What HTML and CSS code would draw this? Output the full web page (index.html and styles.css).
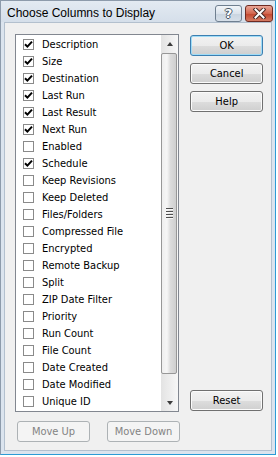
FILE: index.html
```html
<!DOCTYPE html>
<html lang="en">
<head>
    <meta charset="UTF-8">
    <meta name="viewport" content="width=device-width, initial-scale=1.0">
    <title>Choose Columns to Display</title>
    <link rel="stylesheet" href="styles.css">
</head>
<body>
    <div class="window">
        <div class="titlebar">
            <div class="title">Choose Columns to Display</div>
            <div class="caption">
                <button class="cap-btn cap-help">?</button>
                <button class="cap-btn cap-close">
                    <svg width="13" height="11" viewBox="0 0 13 11">
                        <path d="M2.5 1.5 L10.5 9.5 M10.5 1.5 L2.5 9.5" stroke="#4a2a26" stroke-width="4" stroke-linecap="square" fill="none"/>
                        <path d="M2.5 1.5 L10.5 9.5 M10.5 1.5 L2.5 9.5" stroke="#ffffff" stroke-width="2" stroke-linecap="square" fill="none"/>
                    </svg>
                </button>
            </div>
        </div>

        <div class="client">
            <div class="main">
                <div class="listbox">
                    <ul id="columns" class="items"></ul>
                    <div class="scrollbar">
                        <div class="sb-arrow"><span class="tri-up"></span></div>
                        <div class="sb-track">
                            <div class="sb-thumb">
                                <div class="grip"><i></i><i></i><i></i><i></i></div>
                            </div>
                        </div>
                        <div class="sb-arrow"><span class="tri-down"></span></div>
                    </div>
                </div>

                <div class="actions">
                    <button class="btn btn-default">OK</button>
                    <button class="btn">Cancel</button>
                    <button class="btn">Help</button>
                    <button class="btn btn-reset">Reset</button>
                </div>
            </div>

            <div class="move-row">
                <button class="btn" disabled>Move Up</button>
                <button class="btn" disabled>Move Down</button>
            </div>
        </div>
    </div>

    <script>
        const columns = [
            ['Description', true],
            ['Size', true],
            ['Destination', true],
            ['Last Run', true],
            ['Last Result', true],
            ['Next Run', true],
            ['Enabled', false],
            ['Schedule', true],
            ['Keep Revisions', false],
            ['Keep Deleted', false],
            ['Files/Folders', false],
            ['Compressed File', false],
            ['Encrypted', false],
            ['Remote Backup', false],
            ['Split', false],
            ['ZIP Date Filter', false],
            ['Priority', false],
            ['Run Count', false],
            ['File Count', false],
            ['Date Created', false],
            ['Date Modified', false],
            ['Unique ID', false]
        ];

        const checkSvg = '<svg width="9" height="9" viewBox="0 0 9 9"><path d="M1 4.2 L3.4 6.6 L8 1.6" stroke="#000" stroke-width="2" fill="none"/></svg>';
        const list = document.getElementById('columns');

        columns.forEach(([name, checked]) => {
            const li = document.createElement('li');
            li.className = 'item';
            li.innerHTML = `<span class="check">${checked ? checkSvg : ''}</span><span class="label">${name}</span>`;
            li.addEventListener('click', () => {
                const box = li.querySelector('.check');
                box.innerHTML = box.innerHTML ? '' : checkSvg;
            });
            list.appendChild(li);
        });
    </script>
</body>
</html>
```

FILE: styles.css
```css
body {
    margin: 0;
    background: #ffffff;
    font-family: "DejaVu Sans Condensed", "DejaVu Sans", sans-serif;
    font-size: 11px;
    color: #000;
}

.window {
    width: 276px;
    height: 455px;
    box-sizing: border-box;
    border: 1px solid;
    border-color: #8d9bab #2c9bd6 #2c9bd6 #8d9bab;
    background: #dbe4ee;
    display: flex;
    flex-direction: column;
}

.titlebar {
    height: 21px;
    display: flex;
    align-items: center;
    padding: 0 2px 0 6px;
    background: linear-gradient(#e3eaf2, #d5dfea);
}

.title {
    font-family: "Liberation Sans", Arial, sans-serif;
    font-size: 12px;
    padding-top: 3px;
}

.caption {
    margin-left: auto;
    display: flex;
    gap: 3px;
    padding-top: 3px;
}

.cap-btn {
    width: 27px;
    height: 17px;
    padding: 0;
    border: 1px solid #6f7f90;
    border-radius: 3px;
    display: flex;
    align-items: center;
    justify-content: center;
}

.cap-help {
    background: linear-gradient(#f1f5f9, #dbe3ec 50%, #c9d4e0 51%, #d6dfe9);
    font-family: "DejaVu Sans", sans-serif;
    font-weight: bold;
    font-size: 13px;
    color: #fff;
    text-shadow: 1px 0 #465566, -1px 0 #465566, 0 1px #465566, 0 -1px #465566;
}

.cap-close {
    width: 28px;
    border-color: #6e2b22;
    background: linear-gradient(#e9a697, #d3664e 50%, #c2452c 51%, #d57a62);
}

.client {
    flex: 1;
    margin: 0 3px 3px;
    border: 1px solid #b3c0ce;
    background: #f0f0f0;
    padding: 11px 8px 8px 10px;
    display: flex;
    flex-direction: column;
}

.main {
    display: flex;
    gap: 11px;
}

.listbox {
    width: 165px;
    height: 378px;
    box-sizing: border-box;
    border: 1px solid #828790;
    background: #fff;
    display: flex;
}

.items {
    list-style: none;
    margin: 0;
    padding: 1px 0 0 7px;
    flex: 1;
}

.item {
    height: 17px;
    display: flex;
    align-items: center;
    cursor: default;
}

.check {
    width: 11px;
    height: 11px;
    box-sizing: border-box;
    border: 1px solid #8a8a8a;
    background: #fff;
    display: flex;
    align-items: center;
    justify-content: center;
    margin-right: 8px;
}

.scrollbar {
    width: 17px;
    display: flex;
    flex-direction: column;
    background: linear-gradient(to right, #e3e3e3, #f1f1f1 70%, #f7f7f7);
}

.sb-arrow {
    height: 17px;
    display: flex;
    align-items: center;
    justify-content: center;
}

.tri-up {
    border-left: 3.5px solid transparent;
    border-right: 3.5px solid transparent;
    border-bottom: 4px solid #3c3c3c;
}

.tri-down {
    border-left: 3.5px solid transparent;
    border-right: 3.5px solid transparent;
    border-top: 4px solid #3c3c3c;
}

.sb-track {
    flex: 1;
    padding-top: 1px;
}

.sb-thumb {
    height: 321px;
    box-sizing: border-box;
    margin-right: 1px;
    border: 1px solid #979797;
    border-radius: 2px;
    background: linear-gradient(to right, #eeeeee, #f6f6f6 35%, #dcdcdc 60%, #cfcfcf);
    display: flex;
    align-items: center;
    justify-content: center;
}

.grip {
    display: flex;
    flex-direction: column;
    gap: 1px;
}

.grip i {
    display: block;
    width: 7px;
    height: 1px;
    background: #4f4f4f;
    border-bottom: 1px solid #f8f8f8;
}

.actions {
    width: 73px;
    display: flex;
    flex-direction: column;
    gap: 7px;
    padding: 1px 0;
}

.btn {
    height: 21px;
    padding: 0;
    border: 1px solid #707070;
    border-radius: 3px;
    background: linear-gradient(#f2f2f2, #ebebeb 50%, #dddddd 51%, #cfcfcf);
    box-shadow: inset 0 0 0 1px #fbfbfb;
    font-family: inherit;
    font-size: 11px;
    color: #000;
}

.btn-default {
    border-color: #3c7fb1;
    box-shadow: inset 0 0 0 1px #9fdcf7;
}

.btn-reset {
    margin-top: auto;
}

.btn:disabled {
    border-color: #adb2b5;
    background: #f4f4f4;
    box-shadow: none;
    color: #838383;
}

.move-row {
    display: flex;
    gap: 17px;
    margin: 9px 0 0 2px;
}

.move-row .btn {
    width: 73px;
}
```
